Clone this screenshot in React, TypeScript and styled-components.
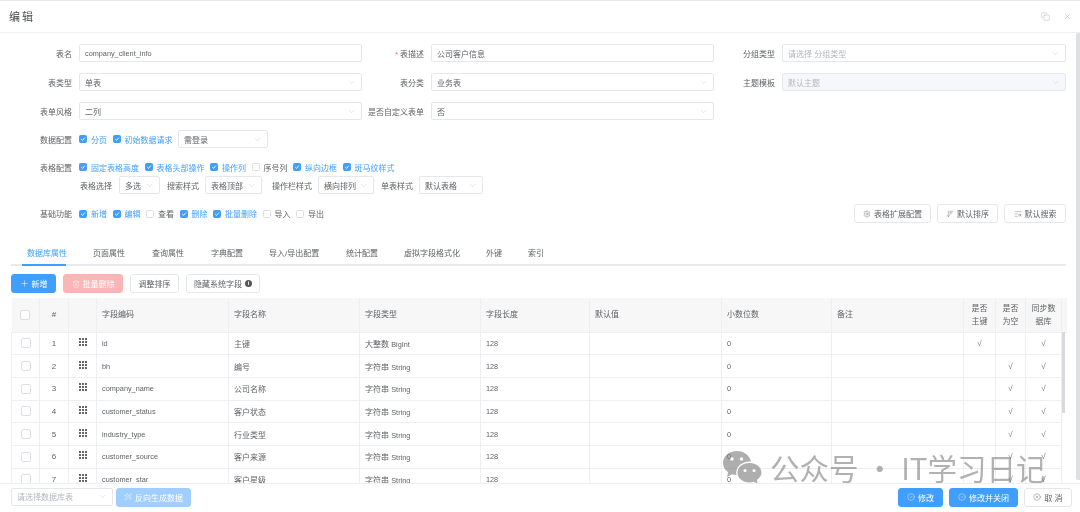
import { ReactNode } from "react";
import styled, { createGlobalStyle } from "styled-components";
import {
  ArrowDownWideNarrow,
  ChevronDown,
  CircleCheck,
  CircleX,
  Copy,
  Plus,
  Settings,
  TextSearch,
  Trash2,
  Wand2,
  X,
} from "lucide-react";

const GlobalStyle = createGlobalStyle`
  html, body {
    margin: 0;
    padding: 0;
    background: #fff;
    overflow: hidden;
  }
  body {
    font-family: "Liberation Sans", "Noto Sans CJK SC", sans-serif;
    color: #606266;
  }
`;

const Dialog = styled.div`
  width: 1080px;
  height: 512px;
  display: flex;
  flex-direction: column;
  border-top: 1px solid #e8e8e8;
  box-sizing: border-box;
  position: relative;
  overflow: hidden;
  filter: blur(0.35px);
`;

const Header = styled.header`
  height: 32px;
  flex: none;
  display: flex;
  align-items: center;
  justify-content: space-between;
  padding: 0 8px 1px 9px;
  border-bottom: 1px solid #eeeff2;
  box-sizing: border-box;
`;

const Title = styled.h1`
  margin: 0;
  font-size: 11px;
  font-weight: 400;
  letter-spacing: 2px;
  color: #4a4c50;
`;

const HeaderTools = styled.div`
  display: flex;
  gap: 13px;
  color: #a8abb2;
`;

const Middle = styled.div`
  flex: 1;
  min-height: 0;
  display: flex;
`;

const Main = styled.main`
  flex: 1;
  min-width: 0;
  padding: 11px 10px 0 0;
  overflow: hidden;
`;

const PageScrollbar = styled.div`
  width: 4px;
  flex: none;
  margin-bottom: 3px;
  border-radius: 2px 0 0 2px;
  background: #dfe0e3;
`;

const FormRow = styled.div<{ $mb?: number }>`
  display: flex;
  height: 18px;
  margin-bottom: ${(p) => p.$mb ?? 11}px;
`;

const Field = styled.div<{ $w: number }>`
  width: ${(p) => p.$w}px;
  flex: none;
  display: flex;
  align-items: center;
`;

const Label = styled.label<{ $w?: number }>`
  width: ${(p) => p.$w ?? 72}px;
  margin-right: 7px;
  flex: none;
  text-align: right;
  font-size: 8px;
  white-space: nowrap;
  color: #606266;
`;

const Required = styled.span`
  color: #f56c6c;
  margin-right: 2px;
`;

const InputBox = styled.div<{ $disabled?: boolean; $w?: number }>`
  flex: ${(p) => (p.$w ? "none" : 1)};
  width: ${(p) => (p.$w ? `${p.$w}px` : "auto")};
  height: 18px;
  box-sizing: border-box;
  display: flex;
  align-items: center;
  justify-content: space-between;
  padding: 0 5px;
  border: 1px solid #e4e7ed;
  border-radius: 2px;
  background: ${(p) => (p.$disabled ? "#f5f7fa" : "#fff")};
  font-size: 8px;
  white-space: nowrap;
  overflow: hidden;
  color: #606266;
  svg {
    flex: none;
    color: #b8bbc2;
  }
`;

const Latin = styled.span`
  font-size: 7.3px;
`;

const Placeholder = styled.span`
  color: #b4b7bd;
`;

const CheckRow = styled.div<{ $mb?: number }>`
  display: flex;
  align-items: center;
  height: 18px;
  margin-bottom: ${(p) => p.$mb ?? 0}px;
`;

const CheckGroup = styled.div`
  display: flex;
  align-items: center;
  gap: 5.5px;
`;

const CheckItem = styled.span<{ $on: boolean }>`
  display: inline-flex;
  align-items: center;
  gap: 4px;
  font-size: 8px;
  white-space: nowrap;
  color: ${(p) => (p.$on ? "#409eff" : "#606266")};
`;

const CheckBox = styled.span<{ $on?: boolean }>`
  width: 8px;
  height: 8px;
  flex: none;
  box-sizing: border-box;
  display: inline-flex;
  align-items: center;
  justify-content: center;
  border: 1px solid ${(p) => (p.$on ? "#409eff" : "#dcdfe6")};
  border-radius: 1.5px;
  background: ${(p) => (p.$on ? "#409eff" : "#fff")};
`;

const SubRow = styled.div`
  display: flex;
  align-items: center;
  height: 18px;
  padding-left: 80px;
  margin-bottom: 10px;
`;

const SubLabel = styled.span<{ $w: number; $pad?: number }>`
  width: ${(p) => p.$w}px;
  flex: none;
  box-sizing: border-box;
  padding-left: ${(p) => p.$pad ?? 0}px;
  font-size: 8px;
  white-space: nowrap;
`;

const ToolRow = styled.div`
  display: flex;
  align-items: center;
  justify-content: space-between;
  height: 19px;
  margin-bottom: 22px;
`;

const ButtonGroup = styled.div<{ $gap?: number }>`
  display: flex;
  gap: ${(p) => p.$gap ?? 6}px;
`;

const Button = styled.button<{ $kind?: "primary" | "danger" | "faded"; $w: number }>`
  width: ${(p) => p.$w}px;
  height: 19px;
  padding: 0;
  box-sizing: border-box;
  display: inline-flex;
  align-items: center;
  justify-content: center;
  gap: 3px;
  border-radius: 3px;
  font: inherit;
  font-size: 8px;
  white-space: nowrap;
  border: 1px solid
    ${(p) =>
      p.$kind === "primary"
        ? "#409eff"
        : p.$kind === "danger"
        ? "#fab6b6"
        : p.$kind === "faded"
        ? "#a0cfff"
        : "#e4e7ed"};
  background: ${(p) =>
    p.$kind === "primary"
      ? "#409eff"
      : p.$kind === "danger"
      ? "#fab6b6"
      : p.$kind === "faded"
      ? "#a0cfff"
      : "#fff"};
  color: ${(p) => (p.$kind ? "#fff" : "#606266")};
`;

const Tabs = styled.nav`
  display: flex;
  height: 19px;
  margin-left: 11px;
  border-bottom: 2px solid #e9eaef;
  position: relative;
`;

const Tab = styled.span<{ $active?: boolean; $w: number }>`
  width: ${(p) => p.$w}px;
  flex: none;
  box-sizing: border-box;
  padding: 3px 0 0 16px;
  font-size: 8px;
  line-height: 12px;
  white-space: nowrap;
  color: ${(p) => (p.$active ? "#409eff" : "#606266")};
  position: relative;
  &::after {
    content: "";
    display: ${(p) => (p.$active ? "block" : "none")};
    position: absolute;
    left: 11px;
    right: 11px;
    bottom: -2px;
    height: 2px;
    background: #409eff;
  }
`;

const TableBar = styled.div`
  display: flex;
  margin: 8px 0 5px 11px;
`;

const InfoDot = styled.span`
  width: 7px;
  height: 7px;
  border-radius: 50%;
  background: #555;
  color: #fff;
  font-size: 6px;
  line-height: 7px;
  text-align: center;
  font-weight: 700;
`;

const TableWrap = styled.div`
  position: relative;
  margin-left: 11px;
  width: 1055px;
`;

const Table = styled.table`
  width: 1055px;
  table-layout: fixed;
  border-collapse: collapse;
  font-size: 8px;
  color: #606266;
`;

const HeadCell = styled.th<{ $center?: boolean }>`
  height: 34px;
  padding: 0 ${(p) => (p.$center ? 0 : 5)}px;
  box-sizing: border-box;
  background: #f7f7f8;
  border-right: 1px solid #eeeff2;
  border-bottom: 1px solid #eeeff2;
  text-align: ${(p) => (p.$center ? "center" : "left")};
  font-weight: 400;
  line-height: 13px;
  color: #606266;
  &:last-child {
    border-right: none;
  }
`;

const Cell = styled.td<{ $center?: boolean }>`
  height: 22.7px;
  padding: 0 ${(p) => (p.$center ? 0 : 5)}px;
  box-sizing: border-box;
  border-right: 1px solid #eeeff2;
  border-bottom: 1px solid #eeeff2;
  text-align: ${(p) => (p.$center ? "center" : "left")};
  white-space: nowrap;
  color: #606266;
  &:first-child {
    border-left: 1px solid #eeeff2;
  }
  &:last-child {
    border-right: none;
    border-bottom: none;
  }
`;

const TableCheck = styled(CheckBox)`
  width: 10px;
  height: 10px;
  border-radius: 2px;
  vertical-align: middle;
`;

const Tick = styled.span`
  font-size: 8px;
  color: #777;
`;

const GripIcon = styled.svg`
  display: inline-block;
  vertical-align: middle;
  margin-bottom: 3px;
`;

const TableScrollThumb = styled.div`
  position: absolute;
  right: 1px;
  top: 34px;
  width: 3px;
  height: 81px;
  background: #d8d9dc;
`;

const Footer = styled.footer`
  flex: none;
  height: 29px;
  display: flex;
  align-items: center;
  justify-content: space-between;
  padding: 0 8px 2px 11px;
  box-sizing: border-box;
  border-top: 1px solid #eeeff2;
  background: #fff;
  position: relative;
  z-index: 1;
`;

const Watermark = styled.div`
  position: absolute;
  left: 722px;
  top: 448px;
  height: 36px;
  display: flex;
  align-items: center;
  gap: 8px;
  font-family: "Noto Sans CJK SC", sans-serif;
  font-size: 29.5px;
  line-height: 36px;
  white-space: nowrap;
  color: rgba(120, 120, 122, 0.58);
`;

const CheckMark = () => (
  <svg width="6" height="6" viewBox="0 0 6 6" fill="none">
    <path d="M1.2 3 2.6 4.4 4.9 1.6" stroke="#fff" strokeWidth="0.9" />
  </svg>
);

const Check = ({ on, children }: { on: boolean; children: ReactNode }) => (
  <CheckItem $on={on}>
    <CheckBox $on={on}>{on && <CheckMark />}</CheckBox>
    {children}
  </CheckItem>
);

const Select = ({
  value,
  w,
  disabled,
  placeholder,
}: {
  value: string;
  w?: number;
  disabled?: boolean;
  placeholder?: boolean;
}) => (
  <InputBox $w={w} $disabled={disabled}>
    {placeholder || disabled ? <Placeholder>{value}</Placeholder> : <span>{value}</span>}
    <ChevronDown size={9} strokeWidth={1} />
  </InputBox>
);

const Grip = () => (
  <GripIcon width="8" height="8" viewBox="0 0 8 8" fill="#666">
    {[0, 3, 6].map((y) =>
      [0, 3, 6].map((x) => <rect key={`${x}-${y}`} x={x} y={y} width="2" height="2" />)
    )}
  </GripIcon>
);

const WeChat = () => (
  <svg width="40" height="34" viewBox="0 0 40 34" fill="rgba(120,120,122,0.6)">
    <path d="M15 1C7 1 1 6.300 1 13c0 3.700 2 7 5 9.200L5 27l5-2.800c1.500.5 3 .8 4.700.8C14 23.500 14 22 14.500 20.500 16 14.500 22 10.800 29 11.500 27.500 5.500 22 1 15 1z" />
    <path d="M27.500 13C20.600 13 15.500 17.300 15.500 22.700S20.600 32.400 27.500 32.400c1.400 0 2.800-.2 4-.6l4.300 2-1-3.800C37.400 28.200 39.500 25.600 39.500 22.700 39.500 17.300 34.400 13 27.500 13z" />
    <circle cx="10" cy="9" r="1.700" fill="#fff" />
    <circle cx="19.500" cy="9" r="1.700" fill="#fff" />
    <circle cx="23" cy="20.500" r="1.500" fill="#fff" />
    <circle cx="32" cy="20.500" r="1.500" fill="#fff" />
  </svg>
);

const columns = [28, 29, 28, 132, 131, 121, 109, 132, 110, 132, 32, 30, 36, 5];

const headers = [
  "",
  "#",
  "",
  "字段编码",
  "字段名称",
  "字段类型",
  "字段长度",
  "默认值",
  "小数位数",
  "备注",
];

const rows = [
  ["id", "主键", "大整数", "BigInt", true, false],
  ["bh", "编号", "字符串", "String", false, true],
  ["company_name", "公司名称", "字符串", "String", false, true],
  ["customer_status", "客户状态", "字符串", "String", false, true],
  ["industry_type", "行业类型", "字符串", "String", false, true],
  ["customer_source", "客户来源", "字符串", "String", false, true],
  ["customer_star", "客户星级", "字符串", "String", false, true],
] as const;

const tabs: [string, number][] = [
  ["数据库属性", 66],
  ["页面属性", 59],
  ["查询属性", 59],
  ["字典配置", 58],
  ["导入/导出配置", 77],
  ["统计配置", 58],
  ["虚拟字段格式化", 82],
  ["外键", 42],
  ["索引", 40],
];

const App = () => {
  return (
    <Dialog>
      <GlobalStyle />
      <Header>
        <Title>编辑</Title>
        <HeaderTools>
          <Copy size={9} strokeWidth={1.2} />
          <X size={9} strokeWidth={1.2} />
        </HeaderTools>
      </Header>
      <Middle>
        <Main>
          <FormRow>
            <Field $w={362}>
              <Label>表名</Label>
              <InputBox>
                <Latin>company_client_info</Latin>
              </InputBox>
            </Field>
            <Field $w={352}>
              <Label $w={62}>
                <Required>*</Required>表描述
              </Label>
              <InputBox>公司客户信息</InputBox>
            </Field>
            <Field $w={352}>
              <Label $w={61}>分组类型</Label>
              <Select value="请选择 分组类型" placeholder />
            </Field>
          </FormRow>
          <FormRow>
            <Field $w={362}>
              <Label>表类型</Label>
              <Select value="单表" />
            </Field>
            <Field $w={352}>
              <Label $w={62}>表分类</Label>
              <Select value="业务表" />
            </Field>
            <Field $w={352}>
              <Label $w={61}>主题模板</Label>
              <Select value="默认主题" disabled />
            </Field>
          </FormRow>
          <FormRow $mb={10}>
            <Field $w={362}>
              <Label>表单风格</Label>
              <Select value="二列" />
            </Field>
            <Field $w={352}>
              <Label $w={62}>是否自定义表单</Label>
              <Select value="否" />
            </Field>
          </FormRow>

          <CheckRow $mb={10}>
            <Label>数据配置</Label>
            <CheckGroup>
              <Check on>分页</Check>
              <Check on>初始数据请求</Check>
              <Select value="需登录" w={90} />
            </CheckGroup>
          </CheckRow>

          <CheckRow>
            <Label>表格配置</Label>
            <CheckGroup>
              <Check on>固定表格高度</Check>
              <Check on>表格头部操作</Check>
              <Check on>操作列</Check>
              <Check on={false}>序号列</Check>
              <Check on>纵向边框</Check>
              <Check on>斑马纹样式</Check>
            </CheckGroup>
          </CheckRow>
          <SubRow>
            <SubLabel $w={39}>表格选择</SubLabel>
            <Select value="多选" w={41} />
            <SubLabel $w={45} $pad={7}>
              搜索样式
            </SubLabel>
            <Select value="表格顶部" w={57} />
            <SubLabel $w={56} $pad={10}>
              操作栏样式
            </SubLabel>
            <Select value="横向排列" w={56} />
            <SubLabel $w={45} $pad={7}>
              单表样式
            </SubLabel>
            <Select value="默认表格" w={64} />
          </SubRow>

          <ToolRow>
            <CheckRow>
              <Label>基础功能</Label>
              <CheckGroup>
                <Check on>新增</Check>
                <Check on>编辑</Check>
                <Check on={false}>查看</Check>
                <Check on>删除</Check>
                <Check on>批量删除</Check>
                <Check on={false}>导入</Check>
                <Check on={false}>导出</Check>
              </CheckGroup>
            </CheckRow>
            <ButtonGroup>
              <Button $w={77}>
                <Settings size={8} strokeWidth={1.2} />
                表格扩展配置
              </Button>
              <Button $w={61}>
                <ArrowDownWideNarrow size={8} strokeWidth={1.2} />
                默认排序
              </Button>
              <Button $w={62}>
                <TextSearch size={8} strokeWidth={1.2} />
                默认搜索
              </Button>
            </ButtonGroup>
          </ToolRow>

          <Tabs>
            {tabs.map(([name, w], i) => (
              <Tab key={name} $w={w} $active={i === 0}>
                {name}
              </Tab>
            ))}
          </Tabs>

          <TableBar>
            <ButtonGroup $gap={7}>
              <Button $kind="primary" $w={45}>
                <Plus size={9} strokeWidth={1.4} />
                新增
              </Button>
              <Button $kind="danger" $w={60}>
                <Trash2 size={8} strokeWidth={1.2} />
                批量删除
              </Button>
              <Button $w={49}>调整排序</Button>
              <Button $w={74}>
                隐藏系统字段
                <InfoDot>i</InfoDot>
              </Button>
            </ButtonGroup>
          </TableBar>

          <TableWrap>
            <Table>
              <colgroup>
                {columns.map((w, i) => (
                  <col key={i} width={w} />
                ))}
              </colgroup>
              <thead>
                <tr>
                  {headers.map((h, i) => (
                    <HeadCell key={i} $center={i < 3}>
                      {i === 0 ? <TableCheck /> : h}
                    </HeadCell>
                  ))}
                  <HeadCell $center>
                    是否
                    <br />
                    主键
                  </HeadCell>
                  <HeadCell $center>
                    是否
                    <br />
                    为空
                  </HeadCell>
                  <HeadCell $center>
                    同步数
                    <br />
                    据库
                  </HeadCell>
                  <HeadCell />
                </tr>
              </thead>
              <tbody>
                {rows.map(([code, name, typeCn, typeEn, primary, nullable], i) => (
                  <tr key={code}>
                    <Cell $center>
                      <TableCheck />
                    </Cell>
                    <Cell $center>{i + 1}</Cell>
                    <Cell $center>
                      <Grip />
                    </Cell>
                    <Cell>
                      <Latin>{code}</Latin>
                    </Cell>
                    <Cell>{name}</Cell>
                    <Cell>
                      {typeCn} <Latin>{typeEn}</Latin>
                    </Cell>
                    <Cell>
                      <Latin>128</Latin>
                    </Cell>
                    <Cell />
                    <Cell>
                      <Latin>0</Latin>
                    </Cell>
                    <Cell />
                    <Cell $center>{primary && <Tick>√</Tick>}</Cell>
                    <Cell $center>{nullable && <Tick>√</Tick>}</Cell>
                    <Cell $center>
                      <Tick>√</Tick>
                    </Cell>
                    <Cell />
                  </tr>
                ))}
              </tbody>
            </Table>
            <TableScrollThumb />
          </TableWrap>
        </Main>
        <PageScrollbar />
      </Middle>
      <Footer>
        <ButtonGroup $gap={3}>
          <Select value="请选择数据库表" w={102} placeholder />
          <Button $kind="faded" $w={75}>
            <Wand2 size={8} strokeWidth={1.2} />
            反向生成数据
          </Button>
        </ButtonGroup>
        <ButtonGroup>
          <Button $kind="primary" $w={45}>
            <CircleCheck size={8} strokeWidth={1.2} />
            修改
          </Button>
          <Button $kind="primary" $w={69}>
            <CircleCheck size={8} strokeWidth={1.2} />
            修改并关闭
          </Button>
          <Button $w={48}>
            <CircleX size={8} strokeWidth={1.2} />取 消
          </Button>
        </ButtonGroup>
      </Footer>
      <Watermark>
        <WeChat />
        公众号 · IT学习日记
      </Watermark>
    </Dialog>
  );
};

export default App;
